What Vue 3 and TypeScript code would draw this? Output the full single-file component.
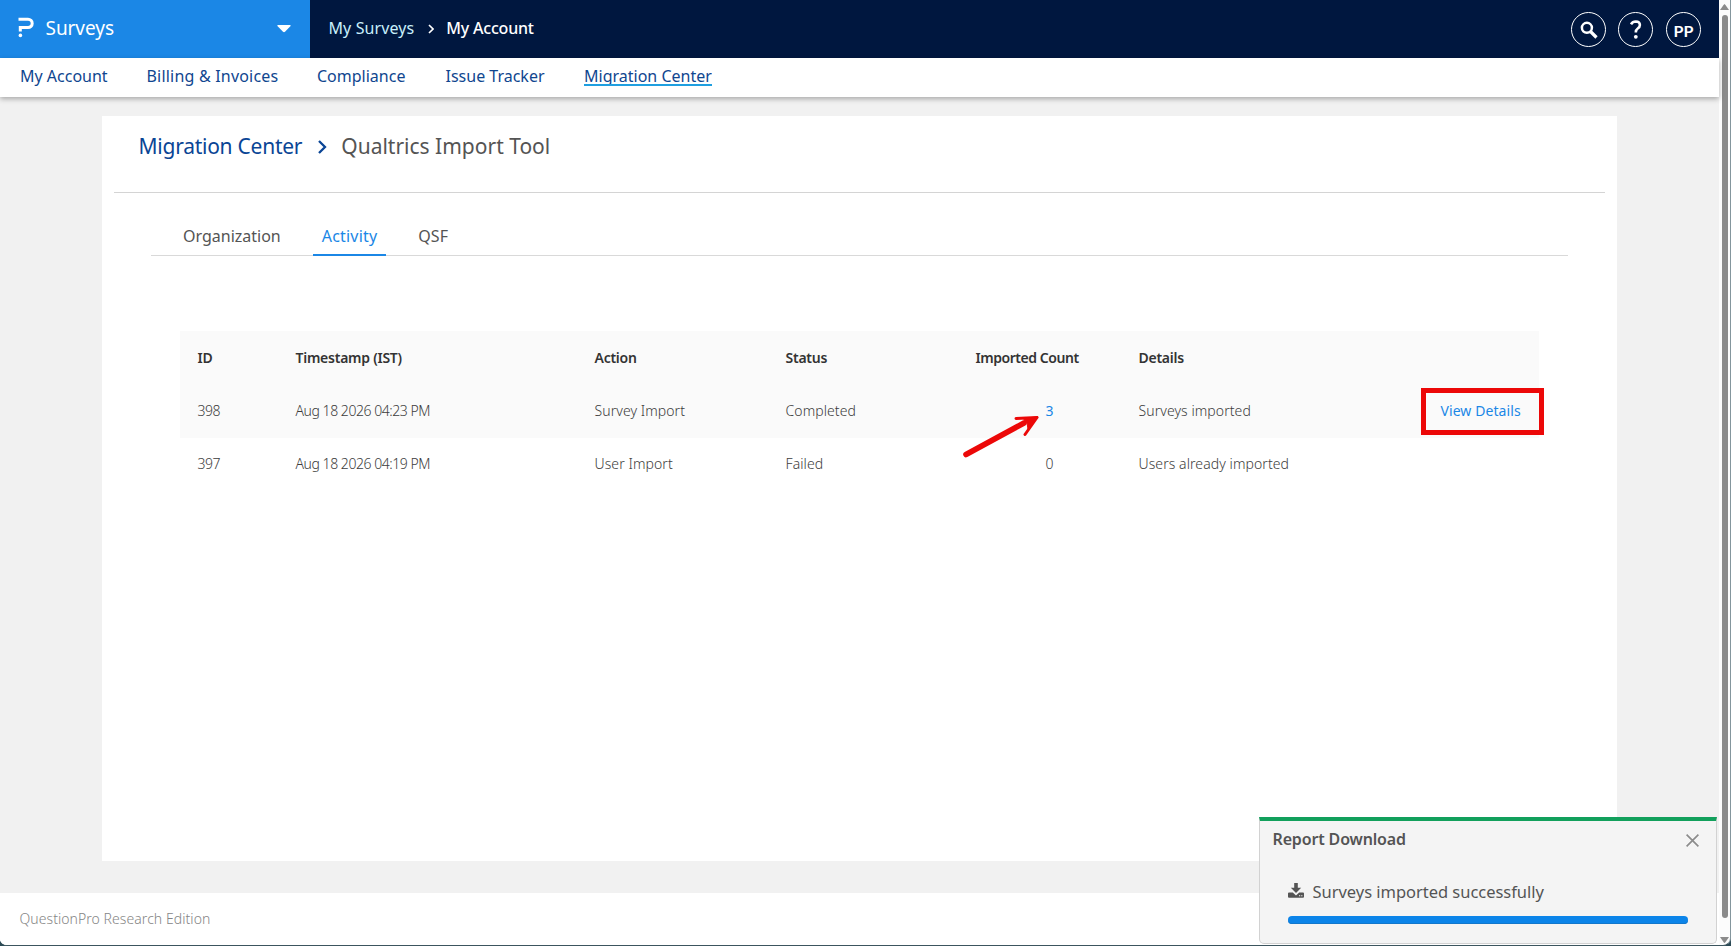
<script setup lang="ts">
interface Activity {
  id: number
  time: string
  action: string
  status: string
  count: number
  details: string
  link: boolean
}

const navItems = ['My Account', 'Billing & Invoices', 'Compliance', 'Issue Tracker', 'Migration Center']
const tabs = ['Organization', 'Activity', 'QSF']
const columns = ['ID', 'Timestamp (IST)', 'Action', 'Status', 'Imported Count', 'Details', '']
const rows: Activity[] = [
  { id: 398, time: 'Aug 18 2026 04:23 PM', action: 'Survey Import', status: 'Completed', count: 3, details: 'Surveys imported', link: true },
  { id: 397, time: 'Aug 18 2026 04:19 PM', action: 'User Import', status: 'Failed', count: 0, details: 'Users already imported', link: false },
]
</script>

<template>
  <div class="window">
    <div class="page">
      <header class="topbar">
        <div class="product">
          <svg class="logo" width="17" height="21" viewBox="0 0 17 21">
            <path d="M0.5 2.2H10a4 4 0 0 1 0 8.400H2.300V14.400" fill="none" stroke="#fff" stroke-width="3" />
            <circle cx="2.4" cy="18.400" r="1.800" fill="#fff" />
          </svg>
          <span class="product-name">Surveys</span>
          <svg class="caret" width="14" height="8" viewBox="0 0 14 8"><path d="M1 0h12q1 0 .6 1L8 6.8q-1 .8-2 0L.4 1Q0 0 1 0z" fill="#fff" /></svg>
        </div>
        <div class="crumbs">
          <span class="crumb-link">My Surveys</span>
          <svg width="6" height="10" viewBox="0 0 6 10"><path d="M1 1l4 4-4 4" fill="none" stroke="#fff" stroke-width="1.6" /></svg>
          <span class="crumb-current">My Account</span>
        </div>
        <div class="actions">
          <span class="round">
            <svg width="18" height="18" viewBox="0 0 18 18" fill="none" stroke="#fff">
              <circle cx="6.9" cy="6.8" r="5" stroke-width="2.5" />
              <path d="M10.5 10.5l6 6" stroke-width="3.2" />
            </svg>
          </span>
          <span class="round help">
            <svg width="12" height="19" viewBox="0 0 12 19">
              <path d="M1 4.4Q2.6 1.5 5.8 1.5q4 .1 4.1 3.5 0 2.1-2.2 3.5Q5.8 9.700 5.800 12.600" fill="none" stroke="#fff" stroke-width="2.6" />
              <circle cx="5.8" cy="16.800" r="1.9" fill="#fff" />
            </svg>
          </span>
          <span class="round initials">PP</span>
        </div>
      </header>

      <nav class="nav">
        <span v-for="item in navItems" :key="item" class="nav-cell">
          <a class="nav-link" :class="{ active: item === 'Migration Center', wide: item.startsWith('Billing') }">{{ item }}</a>
        </span>
      </nav>

      <main class="content">
        <section class="card">
          <div class="title">
            <span class="title-link">Migration Center</span>
            <svg width="11" height="16" viewBox="0 0 11 16"><path d="M2 2l6 6-6 6" fill="none" stroke="#0a4595" stroke-width="2.3" /></svg>
            <span class="title-current">Qualtrics Import Tool</span>
          </div>
          <div class="tabs">
            <span v-for="tab in tabs" :key="tab" class="tab" :class="{ selected: tab === 'Activity' }">{{ tab }}</span>
          </div>

          <div class="table">
            <div class="row head">
              <span v-for="(c, i) in columns" :key="i" :class="{ 'head-count': i === 4 }">{{ c }}</span>
            </div>
            <div v-for="row in rows" :key="row.id" class="row" :class="{ shaded: row.link }">
              <span class="tight">{{ row.id }}</span>
              <span class="tight">{{ row.time }}</span>
              <span>{{ row.action }}</span>
              <span>{{ row.status }}</span>
              <span class="count" :class="{ blue: row.link }">{{ row.count }}</span>
              <span>{{ row.details }}</span>
              <span class="details"><a v-if="row.link" class="blue">View Details</a><i v-if="row.link" class="frame"></i></span>
            </div>
            <svg class="arrow" width="80" height="46" viewBox="0 0 80 46">
              <path d="M5 39.500L63 8" stroke="#ec0808" stroke-width="5.6" stroke-linecap="round" />
              <path d="M76 2.500L55 3.500M76 2.500L64 19.500" stroke="#ec0808" stroke-width="3" stroke-linecap="round" />
              <path d="M77 2L62 3.200L66 8L67 14z" fill="#ec0808" stroke="#ec0808" stroke-linejoin="round" />
            </svg>
          </div>
        </section>
      </main>

      <footer class="footer">QuestionPro Research Edition</footer>
    </div>

    <div class="scrollbar">
      <svg width="9" height="6" viewBox="0 0 9 6"><path d="M4.500 0Q5 0 9 6H0Q4 0 4.500 0z" fill="#8b8b8b" /></svg>
      <div class="thumb"></div>
      <svg width="9" height="6" viewBox="0 0 9 6"><path d="M4.500 6Q5 6 9 0H0Q4 6 4.500 6z" fill="#8b8b8b" /></svg>
    </div>

    <aside class="toast">
      <div class="toast-head">
        <span>Report Download</span>
        <svg width="13" height="13" viewBox="0 0 13 13"><path d="M.6.6l11.800 11.800M12.400.6L.6 12.400" stroke="#8c8c8c" stroke-width="1.7" /></svg>
      </div>
      <div class="toast-body">
        <svg width="16" height="15" viewBox="0 0 16 15">
          <path d="M6.200 0h3.600v4.800h3.400L8 10 2.800 4.800h3.400z" fill="#545454" />
          <path d="M1 9.400h3.800L8 12.400l3.200-3H15q1 0 1 1V13.700q0 1-1 1H1q-1 0-1-1V10.400q0-1 1-1z" fill="#545454" />
          <path d="M11 12.700h1.200M13.200 12.700h1.200" stroke="#f4f4f4" stroke-width="1.100" />
        </svg>
        <span>Surveys imported successfully</span>
      </div>
      <div class="progress"></div>
    </aside>
  </div>
</template>

<style>
body { margin: 0; background: #2b4a55; }
</style>

<style scoped>
.window {
  position: relative;
  display: flex;
  width: 1731px;
  height: 946px;
  box-sizing: border-box;
  border-right: 1px solid #84969d;
  border-bottom: 1px solid #3c555e;
  border-radius: 0 0 8px 7px;
  overflow: hidden;
  background: #fcfcfc;
  font-family: "Noto Sans", "Open Sans", sans-serif;
  font-size: 16px;
  color: #545454;
  white-space: nowrap;
}
.page { width: 1719px; display: flex; flex-direction: column; background: #f1f1f1; }
.topbar { height: 58px; flex: none; display: flex; background: #00173f; color: #fff; }
.product { width: 310px; box-sizing: border-box; display: flex; background: #1b87e6; padding: 0 19px 0 18px; }
.logo { margin-top: 17px; }
.product-name { margin-left: 10.500px; font-size: 19px; line-height: 56px; letter-spacing: -.05px; }
.caret { margin: 25px 0 0 auto; }
.crumbs { display: flex; padding-left: 18.500px; line-height: 57px; }
.crumbs svg { margin: 24px 12px 0 14px; }
.crumb-link { color: #c9f0fb; letter-spacing: .1px; }
.crumb-current { font-weight: 500; letter-spacing: -.2px; }
.actions { margin-left: auto; padding: 12px 18px 0 0; display: flex; gap: 12px; }
.help { margin-right: 1px; }
.round {
  width: 35px; height: 35px; box-sizing: border-box;
  border: 1.300px solid #fff; border-radius: 50%;
  display: flex; align-items: center; justify-content: center;
}
.initials { font: 700 16px/35px Lato, sans-serif; padding-top: 1px; }

.nav {
  position: relative; flex: none; height: 39px; box-sizing: border-box; padding-left: 20px;
  display: grid; grid-template-columns: 126.500px 170.500px 128.500px 138.500px auto;
  background: #fff; box-shadow: 0 2px 5px rgba(0, 0, 0, .3);
  line-height: 36px; color: #10468f;
}
.nav-link { display: inline-block; }
.wide { letter-spacing: .2px; }
.active { height: 26px; overflow: hidden; border-bottom: 2px solid #1f9fe0; }

.content { flex: none; height: 796px; box-sizing: border-box; padding: 19px 102px 32px; }
.card { height: 745px; box-sizing: border-box; padding: 0 12px; background: #fff; }
.title { height: 76px; display: flex; border-bottom: 1px solid #d4d4d4; padding-left: 24.500px; line-height: 60px; font-size: 21px; }
.title svg { margin: 23px 13px 0 15px; }
.title-link { color: #0a4595; letter-spacing: -.25px; }
.tabs { display: flex; height: 63px; box-sizing: border-box; margin: 0 37px; border-bottom: 1px solid #d9d9d9; padding-left: 21px; }
.tab { height: 63px; box-sizing: border-box; padding: 0 11px; margin-right: 21px; line-height: 87px; }
.selected { color: #1b87e6; border-bottom: 2px solid #1b87e6; padding: 0 9px; letter-spacing: .2px; }

.table { position: relative; margin: 75px 66px 0; font-size: 14px; }
.row {
  display: grid; grid-template-columns: 98px 299px 191px 190px 163px 302px auto;
  height: 53px; padding-left: 17.500px; line-height: 52px; font-weight: 300; color: #3c3c3c; letter-spacing: .08px;
}
.shaded { background: #fafafa; }
.head { height: 54px; line-height: 54px; background: #fafafa; color: #333; font-weight: 600; letter-spacing: -.25px; }
.head-count { letter-spacing: -.45px; }
.tight { letter-spacing: -.45px; }
.count { padding-left: 70px; letter-spacing: -.5px; }
.blue { color: #1b87e6; font-weight: 400; }
.details { position: relative; }
.frame { position: absolute; left: -19.500px; top: 3px; width: 113px; height: 37px; border: 5px solid #ec0808; }
.arrow { position: absolute; left: 781px; top: 84px; }

.footer { flex: 1; background: #fff; padding-left: 19.500px; font-size: 14px; line-height: 52px; font-weight: 300; color: #858585; letter-spacing: .06px; }

.scrollbar { width: 11px; display: flex; flex-direction: column; align-items: center; justify-content: space-between; padding: 4px 0 2px; box-sizing: border-box; }
.thumb { width: 6px; height: 903px; border-radius: 3px; background: #8b8b8b; margin-bottom: auto; margin-top: 5px; }

.toast {
  position: absolute; left: 1259px; top: 817px; width: 458px; height: 127px; box-sizing: border-box;
  border: 1px solid #d2d2d2; border-top: 4px solid #12a05c; border-radius: 0 0 5px 5px; background: #f4f4f4;
}
.toast-head { display: flex; justify-content: space-between; padding: 0 17px 0 12.500px; line-height: 37px; height: 57px; font-weight: 600; letter-spacing: -.15px; }
.toast-head svg { margin: 13px 0 0; }
.toast-body { display: flex; gap: 8.500px; padding: 0 0 0 28px; height: 38px; font-size: 16.500px; line-height: 27px; letter-spacing: -.03px; }
.toast-body svg { margin-top: 5px; }
.progress { width: 400px; height: 8px; margin-left: 28px; border-radius: 4px; background: #0b84e9; box-shadow: inset 0 -1px #1277cb; }
</style>
